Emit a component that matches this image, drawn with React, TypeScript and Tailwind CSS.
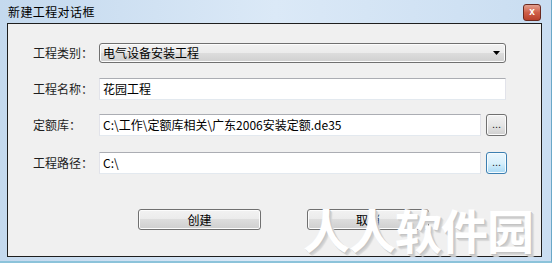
const font = "font-['Microsoft_YaHei','Noto_Sans_CJK_SC',sans-serif]"

const Label = ({ children }: { children: string }) => (
  <div className="w-[66px] text-[12px] leading-none text-[#1e1e1e]">{children}</div>
)

const TextBox = ({ value, className }: { value: string; className: string }) => (
  <div
    className={`h-[22px] flex items-center pl-[3px] text-[12px] text-black bg-white border border-t-[#abadb3] border-x-[#e2e3ea] border-b-[#e3e9ef] ${className}`}
  >
    {value}
  </div>
)

const BrowseButton = ({ active }: { active?: boolean }) => (
  <div
    className={`ml-[5px] w-[21px] h-[22px] rounded-[3px] border flex items-end justify-center pb-[5px] text-[11px] leading-none text-[#222] font-['Liberation_Sans',sans-serif] ${
      active
        ? "border-[#3c7fb1] bg-gradient-to-b from-[#eaf6fd] via-[#d9f0fc] to-[#a7d9f5] shadow-[inset_0_0_0_1px_#f6fbfe]"
        : "border-[#707070] bg-gradient-to-b from-[#f2f2f2] via-[#e6e6e6] to-[#cfcfcf] shadow-[inset_0_0_0_1px_#fbfbfb]"
    }`}
  >
    ...
  </div>
)

const PushButton = ({ text, w }: { text: string; w: string }) => (
  <div
    className={`${w} h-[21px] rounded-[3px] border border-[#707070] flex items-center justify-center text-[12px] text-black bg-[linear-gradient(#f2f2f2_0%,#ebebeb_50%,#dddddd_50%,#cfcfcf_100%)] shadow-[inset_0_0_0_1px_#fcfcfc]`}
  >
    {text}
  </div>
)

export default function App() {
  return (
    <div className={`relative w-[552px] h-[270px] bg-white overflow-hidden ${font}`}>
      <div className="h-[263px] flex flex-col bg-gradient-to-r from-[#c4d9ee] via-[#dbe9f7] to-[#c9ddf1] border-b-[2px] border-[#8cc3da] border-r border-r-[#6aa8c8]">
        {/* title bar */}
        <div className="h-[23px] flex items-center justify-between pl-[8px] pr-[10px]">
          <span className="text-[12px] tracking-[0.4px] text-black leading-none">新建工程对话框</span>
          <div className="w-[18px] h-[17px] mt-[1px] rounded-[3px] border border-[#6b2a20] bg-gradient-to-b from-[#e3a08f] via-[#cf5f48] to-[#b8402a] flex items-center justify-center text-white text-[10px] font-bold leading-none font-['Liberation_Sans',sans-serif]">
            x
          </div>
        </div>

        <div className="flex-1 flex pl-[7px] pr-[9px] pb-[4px]">
          <div className="flex-1 border border-[#1e1e1e] bg-[#f0f0f0] pt-[19px] pl-[25px] flex flex-col">
            <div className="flex items-center h-[20px]">
              <Label>工程类别：</Label>
              <div className="relative w-[407px] h-[20px] rounded-[3px] border border-[#707070] flex items-center pl-[3px] text-[12px] text-black bg-[linear-gradient(#f2f2f2_0%,#ebebeb_50%,#dddddd_50%,#cfcfcf_100%)] shadow-[inset_0_0_0_1px_#fcfcfc]">
                电气设备安装工程
                <svg className="absolute right-[5px] top-[7px]" width="7" height="4" viewBox="0 0 7 4">
                  <path d="M0 0h7L3.5 4z" fill="#000" />
                </svg>
              </div>
            </div>

            <div className="flex items-center mt-[15px]">
              <Label>工程名称：</Label>
              <TextBox value="花园工程" className="w-[407px]" />
            </div>

            <div className="flex items-center mt-[14px]">
              <Label>定额库：</Label>
              <TextBox value="C:\工作\定额库相关\广东2006安装定额.de35" className="w-[382px]" />
              <BrowseButton />
            </div>

            <div className="flex items-center mt-[16px]">
              <Label>工程路径：</Label>
              <TextBox value="C:\" className="w-[382px]" />
              <BrowseButton active />
            </div>

            <div className="flex mt-[35px] pl-[105px] gap-[46px]">
              <PushButton text="创建" w="w-[123px]" />
              <PushButton text="取消" w="w-[122px]" />
            </div>
          </div>
        </div>
      </div>

      {/* watermark */}
      <div className="absolute left-[303px] top-[205px] text-[47px] font-bold leading-none tracking-[-1px] text-white font-['Noto_Sans_CJK_SC',sans-serif] [text-shadow:1px_1px_0_#c4c4c4,2px_2px_0_#cfcfcf,3px_3px_1px_#d8d8d8]">
        人人软件园
      </div>
    </div>
  )
}
